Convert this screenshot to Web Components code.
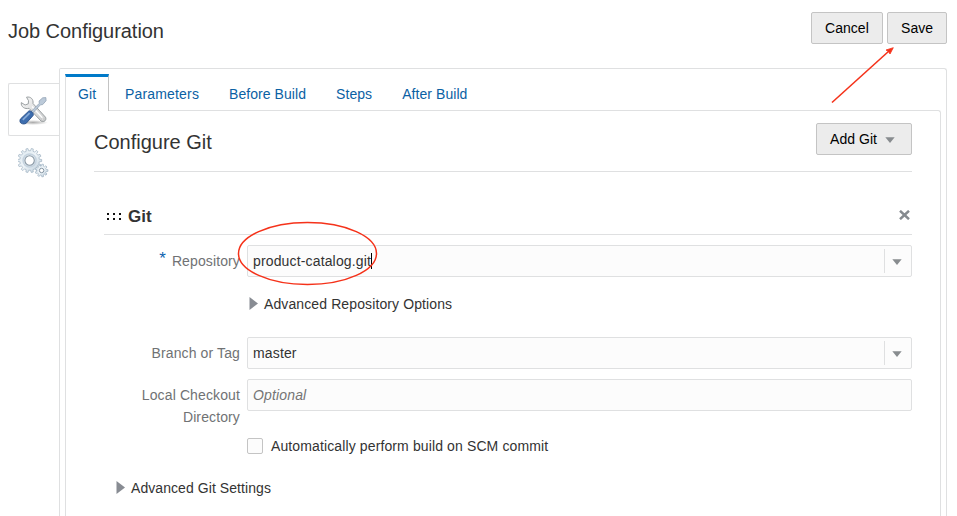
<!DOCTYPE html>
<html lang="en"><head><meta charset="utf-8"><title>Job Configuration</title>
<style>
html,body{margin:0;height:100%;overflow:hidden;background:#fff}
body{font:14px/22px "Liberation Sans",Arial,sans-serif;color:#333}
</style></head><body><job-page></job-page>
<script>
const define=(name,html)=>customElements.define(name,class extends HTMLElement{
 constructor(){super();this.attachShadow({mode:'open'}).innerHTML=html;}
});
define('ui-button',`<style>:host{display:flex;align-items:center;box-sizing:border-box;height:32px;padding:0 13px;border:1px solid #c4c4c4;border-radius:2px;background:#ececec;color:#000;white-space:nowrap;letter-spacing:.04px}</style><slot></slot>`);
define('ui-down',`<style>:host{display:block;width:10px;height:6px}svg{display:block}</style><svg width="10" height="6"><path d="M.3 .2h9.4L5 6z" fill="#888c8f"/></svg>`);
define('ui-field',`<style>:host{display:flex;align-items:center;box-sizing:border-box;height:32px;border:1px solid #dfe0e1;border-radius:2px;background:#fcfcfc;padding-left:5px;color:#333;white-space:nowrap;letter-spacing:.15px}
:host([placeholder]){font-style:italic;color:#757575}
.t{flex:1;display:flex;align-items:center}.d{display:none}:host([combo]) .d{display:flex;width:27px;height:24px;box-sizing:border-box;border-left:1px solid #dfe0e1;align-items:center;padding:2px 0 0 7px}
.c{display:none;width:1px;height:16px;background:#000}:host([caret]) .c{display:block}</style><span class="t"><slot></slot><i class="c"></i></span><span class="d"><ui-down></ui-down></span>`);
define('ui-disclosure',`<style>:host{display:flex;align-items:center;color:#333;white-space:nowrap;height:22px;letter-spacing:var(--ls,.11px)}svg{margin:-1px 5px 0 0;flex:none}</style><svg width="10" height="13"><path d="M.5 0L9 6.500L.5 13z" fill="#888c93"/></svg><slot></slot>`);
define('form-row',`<style>:host{display:grid;grid-template-columns:137px 665px;column-gap:7px}
.l{text-align:right;color:#707274;padding-top:5px;display:flex;justify-content:flex-end;letter-spacing:.12px}
b{display:none;font:17px/22px "Liberation Sans",sans-serif;color:#0b62ae;margin:-2px 6px 0 0}:host([required]) b{display:block}</style><div class="l"><b>*</b><span><slot name="label"></slot></span></div><slot></slot>`);
define('ui-tab',`<style>:host{display:flex;align-items:center;box-sizing:border-box;height:36px;padding:3px 15px 0;color:#0b61a4;white-space:nowrap;letter-spacing:var(--ls,.12px)}
:host([active]){width:44px;height:37px;padding:0 0 1px 12px;border-top:3px solid #007ac9;border-left:1px solid #dfe0e1;border-right:1px solid #c4c4c4;background:#fff;margin-right:1px;z-index:1}</style><slot></slot>`);
define('icon-tools',`<style>:host,svg{display:block}</style><svg width="32" height="32" viewBox="0 0 32 32"><defs><linearGradient id="w" x1="0" x2="1" y1="0" y2="1"><stop stop-color="#f7f7f7"/><stop offset="1" stop-color="#c8cacb"/></linearGradient><radialGradient id="s"><stop stop-color="#888" stop-opacity=".7"/><stop offset="1" stop-color="#888" stop-opacity="0"/></radialGradient></defs>
<ellipse cx="15" cy="28.500" rx="15" ry="2.500" fill="url(#s)"/>
<path d="M8.500 3.200c4-1 7.200 2 6.500 6.300L27.500 23.200c1.500 2.800-1.500 5.600-4.400 3.900L11 14.300C7 15.500 2.600 12.800 3.300 8.600l3.800 2.400 3.200-1.200.2-3.100z" fill="url(#w)" stroke="#92979a" stroke-width=".9"/><path d="M14 12.500l11 12" stroke="#fff" stroke-width="1.300"/>
<path d="M12 18.700L21.300 9.300l-.3-2.200 3.700-3.300 3.200-.2.200 3.100-3.400 3.900-2.200.2-9.200 9.800z" fill="#bccad9" stroke="#8a9bae" stroke-width=".7"/>
<path d="M2.400 25l8.400-8c1.500-1 5.600 2.400 4.300 4.500l-6.800 7.700c-3 1.900-7.900.1-5.900-4.200z" fill="#3d6dae" stroke="#294f88" stroke-width=".9"/><path d="M4.800 25.800l6.800-6.600" stroke="#86aad8" stroke-width="1.700"/><circle cx="24.800" cy="25" r="1" fill="#fff" stroke="#aaa" stroke-width=".5"/></svg>`);
function gearPath(cx,cy,ro,ri,n){let p='';for(let i=0;i<n;i++){[[-.29,ri],[-.19,ro],[.19,ro],[.29,ri]].forEach(([a,r],k)=>{const t=(i+a)*2*Math.PI/n;p+=(i||k?'L':'M')+(cx+r*Math.cos(t)).toFixed(2)+' '+(cy+r*Math.sin(t)).toFixed(2)})}return p+'z'}
define('icon-gears',`<style>:host,svg{display:block}</style><svg width="32" height="32" viewBox="0 0 32 32"><defs><linearGradient id="g" x1="0" x2="1" y1="0" y2="1"><stop stop-color="#dce7ef"/><stop offset=".5" stop-color="#eef4f8"/><stop offset="1" stop-color="#b6c8d6"/></linearGradient></defs>
<g fill="url(#g)" stroke="#9fb2c2" stroke-width=".7"><path d="${gearPath(11.6,13.500,12.1,9.8,14)}"/><path d="${gearPath(23.6,23.500,6.4,4.7,9)}"/></g><circle cx="11.600" cy="13.500" r="6.500" fill="none" stroke="#c5d3df" stroke-width="1.500"/><circle cx="11.600" cy="13.500" r="4.700" fill="#fff" stroke="#8796a3" stroke-width="1.100"/><circle cx="23.600" cy="23.500" r="2.200" fill="#fff" stroke="#8796a3"/></svg>`);
define('git-section',`<style>:host{display:block}
.h{display:flex;align-items:center;height:38px;width:808px;margin-left:38px;box-sizing:border-box;border-bottom:1px solid #dfe0e1;font-weight:bold;font-size:17px;color:#333}.h span{margin-left:6px;flex:1;padding-top:2px}.grip{margin:1px 0 0 3px}.x{margin:-1px 2px 0 0}
form-row{margin-left:37px}.disc{margin:16px 0 0 183px}.check{display:flex;align-items:center;margin:7px 0 0 181px;height:22px;letter-spacing:.12px}.check i{box-sizing:border-box;width:16px;height:16px;border:1px solid #c4c4c4;border-radius:2px;background:#fcfcfc;margin-right:8px}</style>
<div class="h"><svg class="grip" width="15" height="7"><path d="M0 0h2v2H0zm6 0h2v2H6zm6 0h2v2h-2zM0 5h2v2H0zm6 0h2v2H6zm6 0h2v2h-2z" fill="#111"/></svg><span>Git</span><svg class="x" width="11" height="10"><path d="M1 .8l9 8.400M10 .8L1 9.200" stroke="#858a8f" stroke-width="2.500"/></svg></div>
<form-row required style="margin-top:10px"><span slot="label">Repository</span><ui-field combo caret>product-catalog.git</ui-field></form-row>
<ui-disclosure class="disc">Advanced Repository Options</ui-disclosure>
<form-row style="margin-top:22px"><span slot="label">Branch or Tag</span><ui-field combo>master</ui-field></form-row>
<form-row style="margin-top:10px"><span slot="label">Local Checkout<br>Directory</span><ui-field placeholder>Optional</ui-field></form-row>
<div class="check"><i></i><span>Automatically perform build on SCM commit</span></div>
<ui-disclosure style="margin:20px 0 0 50px;--ls:.07px">Advanced Git Settings</ui-disclosure>`);
define('call-outs',`<style>:host{position:absolute;inset:0;pointer-events:none}svg{display:block}</style><svg width="957" height="516"><ellipse cx="307.500" cy="253.500" rx="69" ry="31" fill="none" stroke="#f5321a" stroke-width="1.500"/><path d="M832 102.500L889 51" stroke="#f5321a" stroke-width="1.600"/><path d="M893.300 47.700L890 54L888.600 51.600L886 50z" fill="#f5321a" stroke="#f5321a" stroke-width=".8"/></svg>`);
define('job-page',`<style>:host{display:flex;flex-direction:column;position:relative;width:957px;height:516px;overflow:hidden}
header{display:flex;box-sizing:border-box;height:68px;padding:12px 10px 0 8px;gap:4px}h1,h2{font-size:20px;font-weight:normal;margin:0;color:#333;flex:1;letter-spacing:-.05px}h1{line-height:38px}
main{display:flex;flex:1;min-height:0;padding:0 10px 0 8px}nav{width:51px;padding-top:15px}
.side{box-sizing:border-box;height:53px;border:1px solid #dfe0e1;border-right:0;border-radius:2px 0 0 2px;padding:10px 0 0 9px;background:#fff}.side+.side{border-color:transparent;background:none}
.outer{box-sizing:border-box;flex:1;border:1px solid #dfe0e1;border-bottom:0;border-radius:2px 3px 0 0;padding:5px 5px 0;display:flex;flex-direction:column;height:500px}
.tabs{display:flex;height:36px}.panel{box-sizing:border-box;flex:1;border:1px solid #dfe0e1;border-bottom:0;border-radius:0 3px 0 0}
.head{display:flex;box-sizing:border-box;margin-left:28px;width:818px;height:61px;padding-top:12px;border-bottom:1px solid #dfe0e1}.head h2{line-height:38px;letter-spacing:0}ui-down{margin:2px 3px 0 8px}git-section{margin-top:25px}</style>
<header><h1>Job Configuration</h1><ui-button style="width:72px">Cancel</ui-button><ui-button style="width:60px">Save</ui-button></header>
<main><nav><div class="side"><icon-tools></icon-tools></div><div class="side"><icon-gears></icon-gears></div></nav>
<div class="outer"><div class="tabs"><ui-tab active>Git</ui-tab><ui-tab style="--ls:.17px">Parameters</ui-tab><ui-tab style="--ls:.06px">Before Build</ui-tab><ui-tab style="--ls:.06px">Steps</ui-tab><ui-tab style="--ls:.06px">After Build</ui-tab></div>
<div class="panel"><div class="head"><h2>Configure Git</h2><ui-button style="width:96px">Add Git<ui-down></ui-down></ui-button></div><git-section></git-section></div></div></main><call-outs></call-outs>`);
</script></body></html>
